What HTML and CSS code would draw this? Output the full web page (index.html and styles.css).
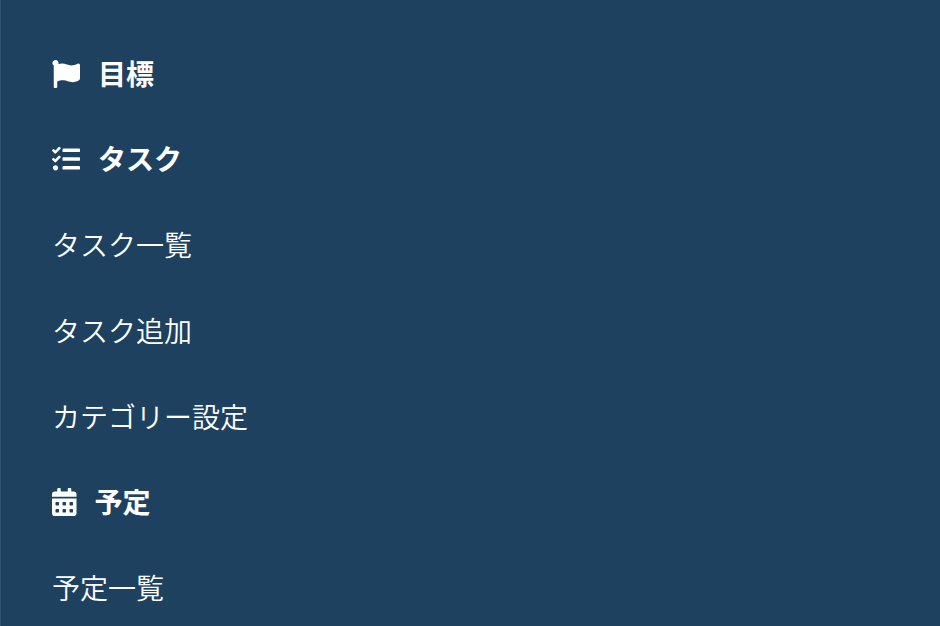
FILE: index.html
```html
<!DOCTYPE html>
<html lang="ja">
<head>
<meta charset="utf-8">
<meta name="viewport" content="width=device-width, initial-scale=1">
<title>メニュー</title>
<link rel="stylesheet" href="styles.css">
</head>
<body>
<nav class="menu">
  <a class="menu-item heading" href="#goal">
    <svg class="icon" viewBox="0 0 512 512" aria-hidden="true"><path d="M349.565 98.783C295.978 98.783 251.721 64 184.348 64c-24.955 0-47.309 4.384-68.045 12.013a55.947 55.947 0 0 0 3.586-23.562C118.117 24.015 94.806 1.206 66.338.048 34.345-1.254 8 24.296 8 56c0 19.026 9.497 35.825 24 45.945V488c0 13.255 10.745 24 24 24h16c13.255 0 24-10.745 24-24v-94.4c28.311-12.064 63.582-22.122 114.435-22.122 53.588 0 97.844 34.783 165.217 34.783 48.169 0 86.667-16.294 122.505-40.858C506.84 359.452 512 349.571 512 339.045v-243.1c0-23.393-24.269-38.87-45.485-29.016-34.338 15.948-76.454 31.854-116.95 31.854z"/></svg>
    <span>目標</span>
  </a>
  <a class="menu-item heading" href="#tasks">
    <svg class="icon" viewBox="0 0 512 512" aria-hidden="true"><path d="M139.61 35.5a12 12 0 0 0-17 0L58.93 98.81l-22.7-22.12a12 12 0 0 0-17 0L3.53 92.41a12 12 0 0 0 0 17l47.59 47.4a12.78 12.78 0 0 0 17.61 0l15.59-15.62L156.52 69a12.09 12.09 0 0 0 .09-17zm0 159.19a12 12 0 0 0-17 0l-63.68 63.72-22.7-22.1a12 12 0 0 0-17 0L3.53 252a12 12 0 0 0 0 17L51 316.5a12.77 12.77 0 0 0 17.6 0l15.7-15.69 72.2-72.22a12 12 0 0 0 .09-16.9zM64 368c-26.49 0-48.59 21.5-48.59 48S37.53 464 64 464a48 48 0 0 0 0-96zm432 16H208a16 16 0 0 0-16 16v32a16 16 0 0 0 16 16h288a16 16 0 0 0 16-16v-32a16 16 0 0 0-16-16zm0-320H208a16 16 0 0 0-16 16v32a16 16 0 0 0 16 16h288a16 16 0 0 0 16-16V80a16 16 0 0 0-16-16zm0 160H208a16 16 0 0 0-16 16v32a16 16 0 0 0 16 16h288a16 16 0 0 0 16-16v-32a16 16 0 0 0-16-16z"/></svg>
    <span>タスク</span>
  </a>
  <a class="menu-item" href="#task-list">タスク一覧</a>
  <a class="menu-item" href="#task-add">タスク追加</a>
  <a class="menu-item" href="#categories">カテゴリー設定</a>
  <a class="menu-item heading" href="#schedule">
    <svg class="icon" viewBox="0 0 448 512" aria-hidden="true"><path d="M0 464c0 26.500 21.500 48 48 48h352c26.500 0 48-21.500 48-48V192H0v272zm320-196c0-6.600 5.400-12 12-12h40c6.600 0 12 5.400 12 12v40c0 6.600-5.400 12-12 12h-40c-6.600 0-12-5.400-12-12v-40zm0 128c0-6.600 5.400-12 12-12h40c6.600 0 12 5.400 12 12v40c0 6.600-5.400 12-12 12h-40c-6.600 0-12-5.400-12-12v-40zM192 268c0-6.600 5.400-12 12-12h40c6.600 0 12 5.400 12 12v40c0 6.600-5.400 12-12 12h-40c-6.600 0-12-5.400-12-12v-40zm0 128c0-6.600 5.400-12 12-12h40c6.600 0 12 5.400 12 12v40c0 6.600-5.400 12-12 12h-40c-6.600 0-12-5.400-12-12v-40zM64 268c0-6.600 5.400-12 12-12h40c6.600 0 12 5.400 12 12v40c0 6.600-5.400 12-12 12H76c-6.600 0-12-5.400-12-12v-40zm0 128c0-6.600 5.400-12 12-12h40c6.600 0 12 5.400 12 12v40c0 6.600-5.400 12-12 12H76c-6.600 0-12-5.400-12-12v-40zM400 64h-48V16c0-8.800-7.200-16-16-16h-32c-8.800 0-16 7.200-16 16v48H160V16c0-8.800-7.200-16-16-16h-32c-8.800 0-16 7.200-16 16v48H48C21.500 64 0 85.500 0 112v48h448v-48c0-26.500-21.500-48-48-48z"/></svg>
    <span>予定</span>
  </a>
  <a class="menu-item" href="#schedule-list">予定一覧</a>
</nav>
</body>
</html>
```
FILE: styles.css
```css
* {
  box-sizing: border-box;
}

body {
  margin: 0;
  background: #1e415f;
  color: #fff;
  font-family: "Noto Sans CJK JP", sans-serif;
  font-size: 28px;
  line-height: 42px;
}

.menu {
  display: flex;
  flex-direction: column;
  min-height: 100vh;
  padding: 31px 51px 0;
  border-left: 1px solid #315473;
}

.menu-item {
  display: flex;
  align-items: center;
  gap: 18px;
  padding: 22px 0;
  color: inherit;
  font-weight: 350;
  text-decoration: none;
}

.heading {
  font-weight: 600;
  line-height: 41px;
}

.icon {
  height: 28px;
  fill: currentColor;
}

@media (max-height: 640px) {
  .menu {
    height: 100vh;
    overflow: hidden;
  }

  .menu-item {
    flex-shrink: 0;
  }
}
```
